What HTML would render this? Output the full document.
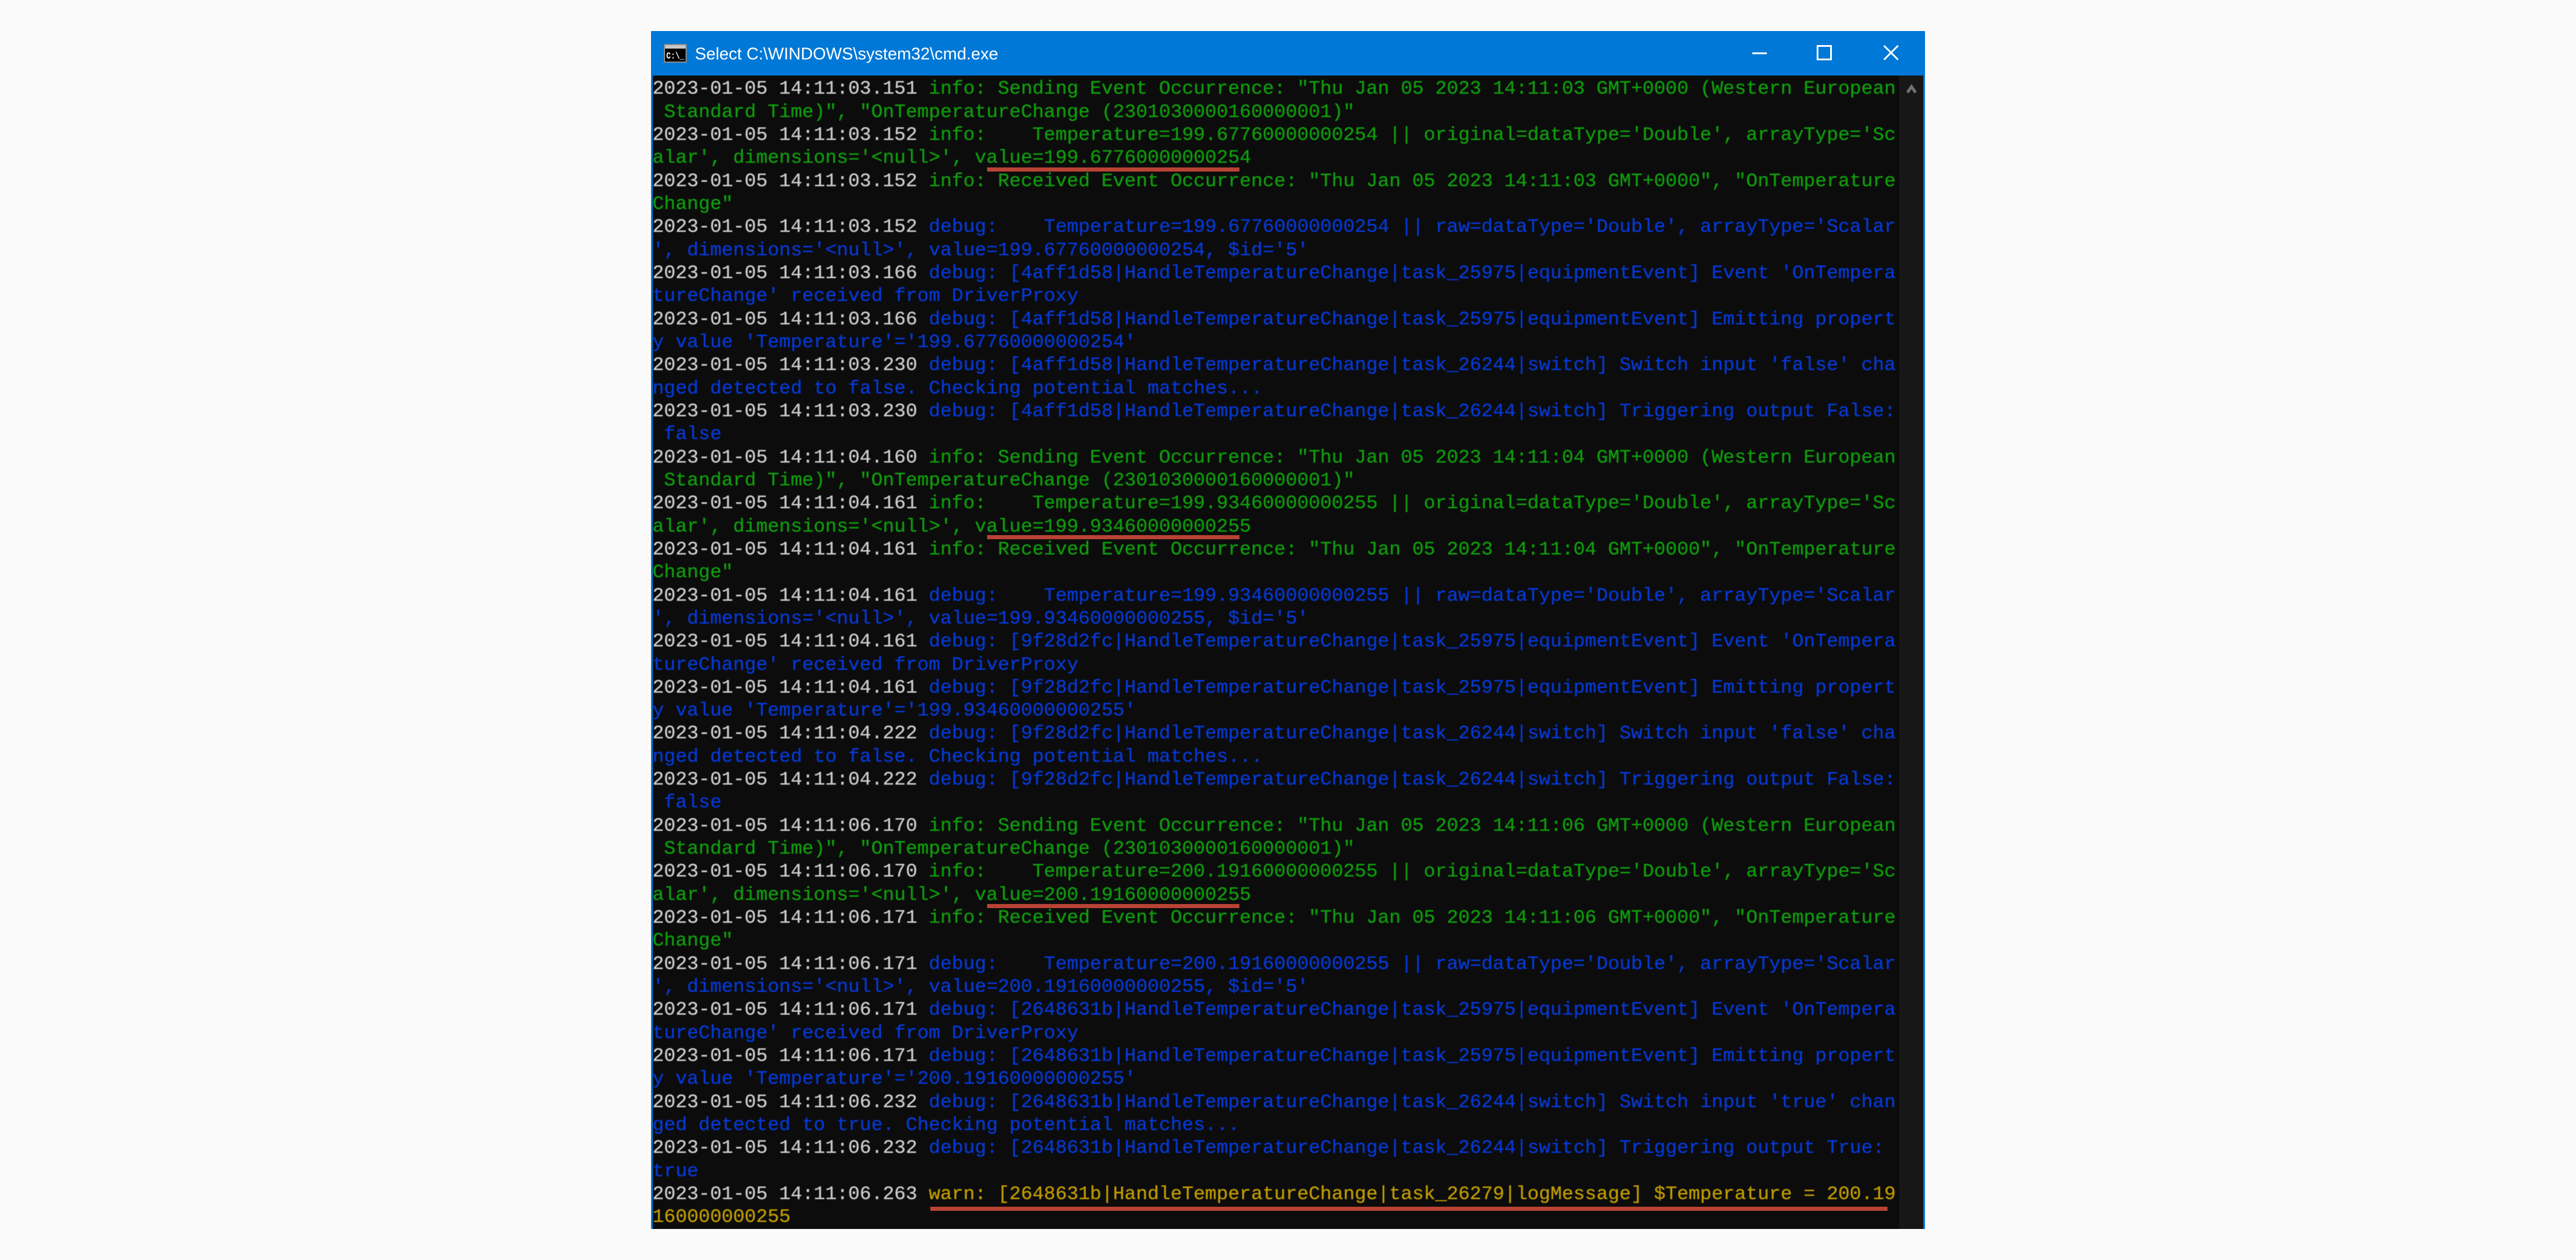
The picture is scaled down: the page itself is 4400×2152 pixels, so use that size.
<!DOCTYPE html>
<html lang="en">
<head>
<meta charset="utf-8">
<title>cmd.exe</title>
<style>
html,body{margin:0;padding:0;background:#fafafa;width:4400px;height:2152px;overflow:hidden}
.a{position:absolute}
#win{left:1112px;top:53px;width:2176px;height:2046px;background:#0078d7}
#con{left:1115px;top:129px;width:2170px;height:1970px;background:#0c0c0c}
#sb{left:3244px;top:129px;width:41px;height:1970px;background:#171717}
pre{position:absolute;left:1114.5px;top:132.3px;margin:0;font-family:"Liberation Mono",monospace;font-size:32.77px;line-height:39.33px;color:#cccccc;white-space:pre;-webkit-text-stroke:.35px currentColor;filter:blur(.5px)}
.g{color:#0f9e0c}.b{color:#0639d6}.y{color:#c19c00}
.u{position:absolute;background:#b84335;height:7px}
svg{position:absolute;left:0;top:0}
</style>
</head>
<body>
<div class="a" id="win"></div>
<div class="a" id="con"></div>
<div class="a" id="sb"></div>
<pre>2023-01-05 14:11:03.151 <span class="g">info: Sending Event Occurrence: "Thu Jan 05 2023 14:11:03 GMT+0000 (Western European
 Standard Time)", "OnTemperatureChange (2301030000160000001)"</span>
2023-01-05 14:11:03.152 <span class="g">info:    Temperature=199.67760000000254 || original=dataType='Double', arrayType='Sc
alar', dimensions='&lt;null&gt;', value=199.67760000000254</span>
2023-01-05 14:11:03.152 <span class="g">info: Received Event Occurrence: "Thu Jan 05 2023 14:11:03 GMT+0000", "OnTemperature
Change"</span>
2023-01-05 14:11:03.152 <span class="b">debug:    Temperature=199.67760000000254 || raw=dataType='Double', arrayType='Scalar
', dimensions='&lt;null&gt;', value=199.67760000000254, $id='5'</span>
2023-01-05 14:11:03.166 <span class="b">debug: [4aff1d58|HandleTemperatureChange|task_25975|equipmentEvent] Event 'OnTempera
tureChange' received from DriverProxy</span>
2023-01-05 14:11:03.166 <span class="b">debug: [4aff1d58|HandleTemperatureChange|task_25975|equipmentEvent] Emitting propert
y value 'Temperature'='199.67760000000254'</span>
2023-01-05 14:11:03.230 <span class="b">debug: [4aff1d58|HandleTemperatureChange|task_26244|switch] Switch input 'false' cha
nged detected to false. Checking potential matches...</span>
2023-01-05 14:11:03.230 <span class="b">debug: [4aff1d58|HandleTemperatureChange|task_26244|switch] Triggering output False:
 false</span>
2023-01-05 14:11:04.160 <span class="g">info: Sending Event Occurrence: "Thu Jan 05 2023 14:11:04 GMT+0000 (Western European
 Standard Time)", "OnTemperatureChange (2301030000160000001)"</span>
2023-01-05 14:11:04.161 <span class="g">info:    Temperature=199.93460000000255 || original=dataType='Double', arrayType='Sc
alar', dimensions='&lt;null&gt;', value=199.93460000000255</span>
2023-01-05 14:11:04.161 <span class="g">info: Received Event Occurrence: "Thu Jan 05 2023 14:11:04 GMT+0000", "OnTemperature
Change"</span>
2023-01-05 14:11:04.161 <span class="b">debug:    Temperature=199.93460000000255 || raw=dataType='Double', arrayType='Scalar
', dimensions='&lt;null&gt;', value=199.93460000000255, $id='5'</span>
2023-01-05 14:11:04.161 <span class="b">debug: [9f28d2fc|HandleTemperatureChange|task_25975|equipmentEvent] Event 'OnTempera
tureChange' received from DriverProxy</span>
2023-01-05 14:11:04.161 <span class="b">debug: [9f28d2fc|HandleTemperatureChange|task_25975|equipmentEvent] Emitting propert
y value 'Temperature'='199.93460000000255'</span>
2023-01-05 14:11:04.222 <span class="b">debug: [9f28d2fc|HandleTemperatureChange|task_26244|switch] Switch input 'false' cha
nged detected to false. Checking potential matches...</span>
2023-01-05 14:11:04.222 <span class="b">debug: [9f28d2fc|HandleTemperatureChange|task_26244|switch] Triggering output False:
 false</span>
2023-01-05 14:11:06.170 <span class="g">info: Sending Event Occurrence: "Thu Jan 05 2023 14:11:06 GMT+0000 (Western European
 Standard Time)", "OnTemperatureChange (2301030000160000001)"</span>
2023-01-05 14:11:06.170 <span class="g">info:    Temperature=200.19160000000255 || original=dataType='Double', arrayType='Sc
alar', dimensions='&lt;null&gt;', value=200.19160000000255</span>
2023-01-05 14:11:06.171 <span class="g">info: Received Event Occurrence: "Thu Jan 05 2023 14:11:06 GMT+0000", "OnTemperature
Change"</span>
2023-01-05 14:11:06.171 <span class="b">debug:    Temperature=200.19160000000255 || raw=dataType='Double', arrayType='Scalar
', dimensions='&lt;null&gt;', value=200.19160000000255, $id='5'</span>
2023-01-05 14:11:06.171 <span class="b">debug: [2648631b|HandleTemperatureChange|task_25975|equipmentEvent] Event 'OnTempera
tureChange' received from DriverProxy</span>
2023-01-05 14:11:06.171 <span class="b">debug: [2648631b|HandleTemperatureChange|task_25975|equipmentEvent] Emitting propert
y value 'Temperature'='200.19160000000255'</span>
2023-01-05 14:11:06.232 <span class="b">debug: [2648631b|HandleTemperatureChange|task_26244|switch] Switch input 'true' chan
ged detected to true. Checking potential matches...</span>
2023-01-05 14:11:06.232 <span class="b">debug: [2648631b|HandleTemperatureChange|task_26244|switch] Triggering output True:
true</span>
2023-01-05 14:11:06.263 <span class="y">warn: [2648631b|HandleTemperatureChange|task_26279|logMessage] $Temperature = 200.19
160000000255</span></pre>
<div class="u" style="left:1686px;top:286px;width:431px"></div>
<div class="u" style="left:1686px;top:914px;width:431px"></div>
<div class="u" style="left:1686px;top:1544px;width:431px"></div>
<div class="u" style="left:1589px;top:2061px;width:1635px"></div>
<svg width="4400" height="2152" viewBox="0 0 4400 2152" xmlns="http://www.w3.org/2000/svg">
  <!-- app icon -->
  <rect x="1134" y="75" width="39" height="32" fill="#8a8a8a"/>
  <rect x="1136" y="77" width="35" height="28" fill="#000"/>
  <rect x="1136" y="77" width="35" height="6" fill="#c8c8c8"/>
  <text x="1138" y="100" font-family="Liberation Mono, monospace" font-weight="700" font-size="16" fill="#fff" textLength="31" lengthAdjust="spacingAndGlyphs">C:\_</text>
  <!-- title -->
  <text x="1187" y="101.5" font-family="Liberation Sans, sans-serif" font-size="29" fill="#ffffff" textLength="518" lengthAdjust="spacingAndGlyphs">Select C:\WINDOWS\system32\cmd.exe</text>
  <!-- window controls -->
  <rect x="2993" y="89.5" width="25" height="3" fill="#fff"/>
  <rect x="3104.5" y="78.5" width="23" height="23" fill="none" stroke="#fff" stroke-width="3"/>
  <path d="M3218 78 L3242 102 M3242 78 L3218 102" stroke="#fff" stroke-width="3" fill="none"/>
  <!-- scrollbar arrow -->
  <path d="M3258 158 L3265 148 L3272 158" stroke="#707070" stroke-width="5" fill="none"/>
</svg>
</body>
</html>
